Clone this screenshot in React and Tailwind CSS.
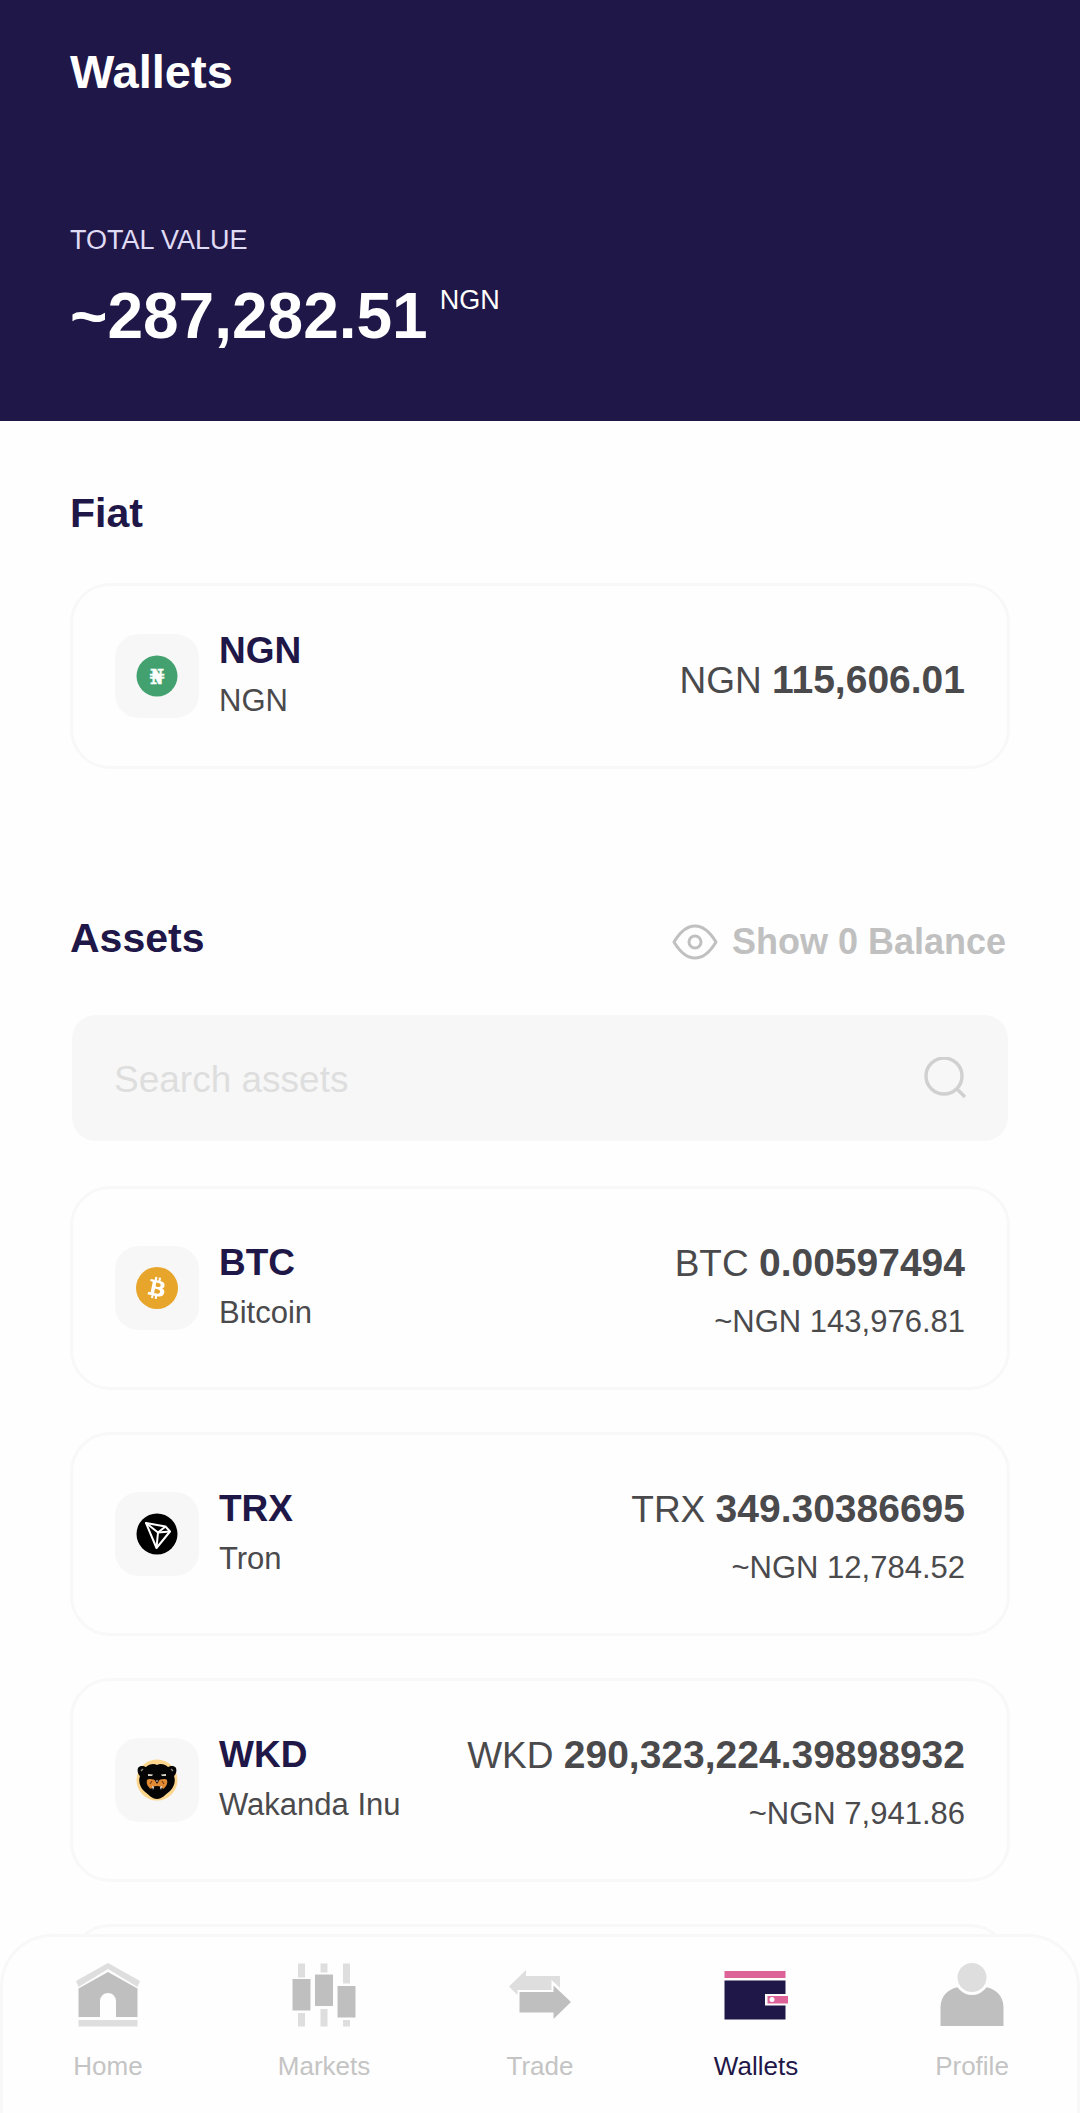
import { useState } from "react";
import { FaBtc } from "react-icons/fa";

function NairaLogo() {
  return (
    <svg viewBox="0 0 42 42" className="size-[42px]" aria-hidden="true">
      <circle cx="21" cy="21" r="20.5" fill="#43a170" />
      <text
        x="21"
        y="28.5"
        textAnchor="middle"
        fontFamily="DejaVu Serif, serif"
        fontWeight="700"
        fontSize="21"
        fill="#fff"
        stroke="#fff"
        strokeWidth="0.6"
      >
        ₦
      </text>
    </svg>
  );
}

function BitcoinLogo() {
  return (
    <span className="flex size-[42px] items-center justify-center rounded-full bg-[#e8a52b]">
      <FaBtc className="size-[22px] rotate-12 text-white" aria-hidden="true" />
    </span>
  );
}

function TronLogo() {
  return (
    <svg viewBox="0 0 42 42" className="size-[42px]" aria-hidden="true">
      <circle cx="21" cy="21" r="20.5" fill="#000" />
      <g fill="none" stroke="#fff" strokeWidth="2" strokeLinejoin="round">
        <path d="M10 10 L29.5 13.5 L34 18.5 L20.5 35 Z" />
        <path d="M10 10 L22 19.5 L20.5 35" />
        <path d="M22 19.5 L29.5 13.5" />
        <path d="M22 19.5 L34 18.5" />
      </g>
    </svg>
  );
}

function WakandaLogo() {
  return (
    <svg viewBox="0 0 42 42" className="size-[42px]" aria-hidden="true">
      <circle cx="21" cy="21" r="20.5" fill="#fbd68c" />
      <path
        d="M2 9 C4 6 8 7 10 8 C13 5 18 4 21 6 C24 4 29 5 32 8 C34 7 38 6 40 9 C41 12 40 15 38 17 C40 22 38 28 34 32 C30 35 26 40 21 40 C16 40 12 35 8 32 C4 28 2 22 4 17 C2 15 1 12 2 9 Z"
        fill="#060505"
      />
      <path
        d="M5 12 L7 10 M37 12 L35 10"
        stroke="#8c8c86"
        strokeWidth="1.4"
      />
      <path d="M12 15 L17 15.500 L16 17 L12 17 Z" fill="#d9d6c8" />
      <path d="M30 15 L25 15.500 L26 17 L30 17 Z" fill="#d9d6c8" />
      <path
        d="M11 21 C13 19 17 20 21 22 C25 20 29 19 31 21 C32 25 30 28 27 30 C26 28 24 27 21 27 C18 27 16 28 15 30 C12 28 10 25 11 21 Z"
        fill="#e08a35"
      />
      <path d="M18 20 L24 20 L21 25 Z" fill="#1a0d05" />
      <path d="M14 25 L16 22 M28 25 L26 22" stroke="#7a3d10" strokeWidth="1.2" />
      <path d="M16 27 L17 31 L18 28 M26 27 L25 31 L24 28" fill="#fff" />
      <circle cx="21" cy="22" r="0.8" fill="#fff" />
    </svg>
  );
}

function EyeIcon() {
  return (
    <svg viewBox="0 0 46 36" className="h-9 w-[46px]" aria-hidden="true">
      <g fill="none" stroke="currentColor" strokeWidth="3">
        <path
          d="M2 18 C8 8 15 2 23 2 C31 2 38 8 44 18 C38 28 31 34 23 34 C15 34 8 28 2 18 Z"
          strokeLinejoin="round"
        />
        <circle cx="23" cy="18" r="6" />
      </g>
    </svg>
  );
}

function SearchIcon() {
  return (
    <svg
      viewBox="0 0 42 42"
      className="size-[42px] shrink-0 text-[#d0d0d0]"
      aria-hidden="true"
    >
      <g fill="none" stroke="currentColor" strokeWidth="3.4">
        <circle cx="20" cy="19" r="18" />
        <path d="M32 31 L41 40" />
      </g>
    </svg>
  );
}

function HomeIcon() {
  return (
    <svg viewBox="0 0 64 64" className="size-16" aria-hidden="true">
      <path d="M32 0 L64 18 L61.500 24 L32 6 L2.500 24 L0 18 Z" fill="#dedede" />
      <path
        d="M32 9 L61.500 25.500 V54 H40 V38 A8 8 0 0 0 24 38 V54 H2.500 V25.500 Z"
        fill="#bfbfbf"
      />
      <rect x="2.500" y="57" width="59" height="6.500" fill="#dedede" />
    </svg>
  );
}

function MarketsIcon() {
  return (
    <svg viewBox="0 0 64 64" className="size-16" aria-hidden="true">
      <g fill="#dedede">
        <rect x="6" y="0.500" width="7" height="14" />
        <rect x="6" y="50" width="7" height="13.500" />
        <rect x="28.500" y="0.500" width="7" height="9" />
        <rect x="28.500" y="46" width="7" height="17.500" />
        <rect x="51" y="0.500" width="7" height="20" />
        <rect x="51" y="57" width="7" height="6.500" />
      </g>
      <g fill="#bfbfbf">
        <rect x="0.500" y="16" width="18" height="31.500" />
        <rect x="23" y="11.500" width="18" height="31.500" />
        <rect x="45.500" y="23" width="18" height="31.500" />
      </g>
    </svg>
  );
}

function TradeIcon() {
  return (
    <svg viewBox="0 0 64 64" className="size-16" aria-hidden="true">
      <path
        d="M1 23.500 L18 7 V13 H52 V25 L43.500 17 V27 H9.500 V32 Z"
        fill="#dedede"
      />
      <path d="M11.500 29 H45.500 V22.500 L63 39 L45.500 56 V49.500 H11.500 Z" fill="#bfbfbf" />
    </svg>
  );
}

function WalletIcon() {
  return (
    <svg viewBox="0 0 64 64" className="size-16" aria-hidden="true">
      <rect x="0.500" y="8" width="61" height="7" fill="#dc6298" />
      <path d="M0.500 17.500 H61.500 V31 H41 V42.500 H61.500 V56.500 H0.500 Z" fill="#1f1747" />
      <rect x="43.500" y="33" width="20.500" height="7.500" fill="#dc6298" />
      <circle cx="48" cy="36.500" r="2.500" fill="#fff" />
    </svg>
  );
}

function ProfileIcon() {
  return (
    <svg viewBox="0 0 64 64" className="size-16" aria-hidden="true">
      <path d="M0.500 63 V44 A20 20 0 0 1 20 24 H44 A20 20 0 0 1 63.500 44 V63 Z" fill="#bfbfbf" />
      <circle cx="32" cy="14.500" r="17.500" fill="#fefefe" />
      <circle cx="32" cy="14.500" r="14.500" fill="#dedede" />
    </svg>
  );
}

const assets = [
  {
    code: "BTC",
    name: "Bitcoin",
    amount: "0.00597494",
    value: "~NGN 143,976.81",
    Logo: BitcoinLogo,
  },
  {
    code: "TRX",
    name: "Tron",
    amount: "349.30386695",
    value: "~NGN 12,784.52",
    Logo: TronLogo,
  },
  {
    code: "WKD",
    name: "Wakanda Inu",
    amount: "290,323,224.39898932",
    value: "~NGN 7,941.86",
    Logo: WakandaLogo,
  },
];

const tabs = [
  { label: "Home", Icon: HomeIcon },
  { label: "Markets", Icon: MarketsIcon },
  { label: "Trade", Icon: TradeIcon },
  { label: "Wallets", Icon: WalletIcon, active: true },
  { label: "Profile", Icon: ProfileIcon },
];

function WalletRow({ code, name, amount, value, Logo }) {
  return (
    <div className="flex grow items-center px-[42px]">
      <div className="flex size-[84px] shrink-0 items-center justify-center rounded-3xl bg-[#f7f7f7]">
        <Logo />
      </div>
      <div className="ml-5 flex flex-col gap-2.5">
        <h3 className="text-[37px] leading-10 font-bold text-[#1f1747]">
          {code}
        </h3>
        <p className="text-[31px] leading-10">{name}</p>
      </div>
      <div className="ml-auto flex flex-col gap-[18px] pt-2 text-right whitespace-nowrap">
        <p className="text-[37px] leading-10">
          {code} <strong className="text-[39px]">{amount}</strong>
        </p>
        {value && <p className="text-[31px] leading-10">{value}</p>}
      </div>
    </div>
  );
}

function App() {
  const [search, setSearch] = useState("");

  const shown = assets.filter((asset) =>
    (asset.code + asset.name).toLowerCase().includes(search.toLowerCase())
  );

  return (
    <div className="flex h-screen flex-col overflow-hidden bg-[#fefefe] font-['Liberation_Sans',Arial,sans-serif] text-[#4a4a4d]">
      <main className="min-h-0 flex-1 overflow-y-auto [scrollbar-width:none]">
        <header className="bg-[#1f1747] px-[70px] pt-12 pb-[73px] text-white">
          <h1 className="text-[47px] leading-12 font-bold">Wallets</h1>
          <p className="mt-32 text-[27px] leading-8 text-[#e0dbf5]">
            TOTAL VALUE
          </p>
          <div className="mt-7 flex items-start gap-3">
            <p className="text-[64px] leading-16 font-bold">~287,282.51</p>
            <span className="text-[27px] leading-8">NGN</span>
          </div>
        </header>

        <section className="px-[70px] pt-[72px]">
          <h2 className="text-[41px] leading-10 font-bold text-[#1f1747]">
            Fiat
          </h2>
          <div className="mt-[50px] flex min-h-[186px] rounded-[40px] border-3 border-[#f8f8f8]">
            <WalletRow
              code="NGN"
              name="NGN"
              amount="115,606.01"
              Logo={NairaLogo}
            />
          </div>
        </section>

        <section className="px-[70px] pt-[149px] pb-24">
          <div className="flex items-start justify-between">
            <h2 className="text-[41px] leading-10 font-bold text-[#1f1747]">
              Assets
            </h2>
            <button className="flex items-center gap-3.5 pt-1 pr-1 text-[36px] leading-10 font-bold text-[#c0c0c0]">
              <EyeIcon />
              Show 0 Balance
            </button>
          </div>

          <label className="mx-0.5 mt-[53px] flex h-[126px] items-center rounded-3xl bg-[#f7f7f7] px-[42px]">
            <input
              type="text"
              aria-label="Search assets"
              placeholder="Search assets"
              value={search}
              onChange={(e) => setSearch(e.target.value)}
              className="min-w-0 flex-1 pt-1 text-[37px] leading-10 outline-none placeholder:text-[#dedede]"
            />
            <SearchIcon />
          </label>

          <ul className="mt-[45px] flex flex-col gap-[42px]">
            {shown.map((asset) => (
              <li
                key={asset.code}
                className="flex min-h-[204px] rounded-[40px] border-3 border-[#f8f8f8]"
              >
                <WalletRow {...asset} />
              </li>
            ))}
            <li
              aria-hidden="true"
              className="min-h-[204px] rounded-[40px] border-3 border-[#f8f8f8]"
            />
          </ul>
        </section>
      </main>

      <nav className="relative -mt-12 rounded-t-[52px] border-3 border-b-0 border-[#f8f8f8] bg-[#fefefe] pt-[26px] pb-[31px]">
        <ul className="-mx-[3px] grid grid-cols-5">
          {tabs.map(({ label, Icon, active }) => (
            <li key={label}>
              <a
                href="#"
                aria-current={active ? "page" : undefined}
                className={`flex flex-col items-center gap-[23px] text-[26px] leading-8 ${
                  active ? "text-[#1f1747]" : "text-[#c4c4c4]"
                }`}
              >
                <Icon />
                {label}
              </a>
            </li>
          ))}
        </ul>
      </nav>
    </div>
  );
}

export default App;
